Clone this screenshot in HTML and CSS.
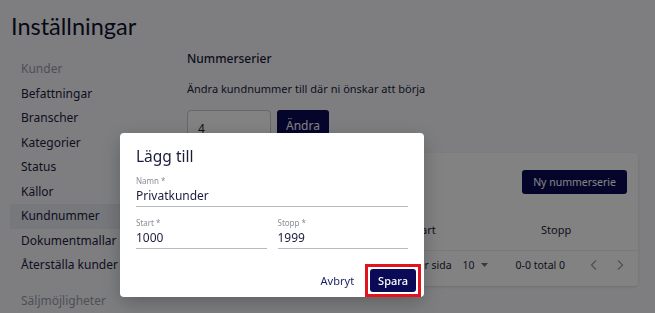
FILE: index.html
```html
<!DOCTYPE html>
<html lang="sv">
<head>
<meta charset="utf-8">
<title>Inställningar</title>
<link rel="stylesheet" href="styles.css">
</head>
<body>
<div class="page">
  <h1 class="title">Inställningar</h1>
  <div class="layout">
    <nav class="sidebar">
      <div class="nav-group">Kunder</div>
      <a class="nav-item">Befattningar</a>
      <a class="nav-item">Branscher</a>
      <a class="nav-item">Kategorier</a>
      <a class="nav-item">Status</a>
      <a class="nav-item">Källor</a>
      <a class="nav-item active">Kundnummer</a>
      <a class="nav-item">Dokumentmallar</a>
      <a class="nav-item">Återställa kunder</a>
      <div class="nav-group lower">Säljmöjligheter</div>
    </nav>
    <main class="main">
      <h2 class="section-title">Nummerserier</h2>
      <p class="section-text">Ändra kundnummer till där ni önskar att börja</p>
      <div class="change-row">
        <div class="num-input">4</div>
        <button class="btn primary">Ändra</button>
      </div>
      <section class="card">
        <div class="card-head">
          <button class="btn primary">Ny nummerserie</button>
        </div>
        <div class="table-head">
          <span class="col-name">Namn</span>
          <span class="col-start">Start</span>
          <span class="col-stop">Stopp</span>
        </div>
        <div class="table-foot">
          <span>Rader per sida</span>
          <span class="per-page">10 <svg width="7" height="4" viewBox="0 0 7 4"><path d="M0 0h7L3.5 4z" fill="currentColor"/></svg></span>
          <span class="range">0-0 total 0</span>
          <span class="pager">
            <svg width="8" height="12" viewBox="0 0 8 12"><path d="M6 1.5L1.5 6 6 10.5" fill="none" stroke="currentColor" stroke-width="1.3"/></svg>
            <svg width="8" height="12" viewBox="0 0 8 12"><path d="M2 1.5L6.5 6 2 10.5" fill="none" stroke="currentColor" stroke-width="1.3"/></svg>
          </span>
        </div>
      </section>
    </main>
  </div>
</div>
<div class="backdrop"></div>
<div class="dialog">
  <h3 class="dialog-title">Lägg till</h3>
  <div class="field">
    <label class="field-label">Namn *</label>
    <div class="field-value">Privatkunder</div>
  </div>
  <div class="field-row">
    <div class="field">
      <label class="field-label">Start *</label>
      <div class="field-value">1000</div>
    </div>
    <div class="field">
      <label class="field-label">Stopp *</label>
      <div class="field-value">1999</div>
    </div>
  </div>
  <div class="dialog-actions">
    <button class="btn text">Avbryt</button>
    <span class="highlight"><button class="btn primary">Spara</button></span>
  </div>
</div>
</body>
</html>
```

FILE: styles.css
```css
* { box-sizing: border-box; }
html, body { margin: 0; height: 100%; }
body {
  background: #f7f8fc;
  font-family: "Noto Sans", "DejaVu Sans", sans-serif;
  color: #1b1d3a;
  overflow: hidden;
}
.page { padding: 9px 0 0 10px; }
.title {
  margin: 0 0 0 1px;
  font-family: Lato, "Noto Sans", sans-serif;
  font-size: 23.5px;
  font-weight: 400;
  line-height: 34px;
  color: #11122f;
  letter-spacing: 0;
}
.layout {
  display: grid;
  grid-template-columns: 165px 1fr;
  gap: 12px;
  margin-top: 4px;
}
.sidebar { display: flex; flex-direction: column; padding-top: 10px; }
.nav-group, .nav-item {
  font-size: 12px;
  line-height: 24.5px;
  padding-left: 11px;
  color: #1e2040;
}
.nav-group { color: #9a9ca6; }
.nav-group.lower { margin-top: 11px; }
.active { background: #e9ebf3; }
.main { padding-right: 17px; }
.section-title {
  margin: 0;
  font-size: 12px;
  font-weight: 500;
  line-height: 24px;
}
.section-text {
  margin: 9px 0 0;
  font-size: 11px;
  line-height: 18px;
}
.change-row {
  display: flex;
  gap: 6px;
  margin-top: 12px;
  height: 31px;
}
.num-input {
  width: 84px;
  height: 38px;
  border: 1px solid #c9cbd3;
  border-radius: 4px;
  padding: 9px 10px;
  font-size: 12px;
  background: #fff;
}
.btn {
  font-family: inherit;
  border: 0;
  border-radius: 3px;
  cursor: pointer;
}
.btn.primary {
  background: #0b0a57;
  color: #fff;
  font-size: 12px;
  padding: 0 9px;
  height: 30px;
}
.btn.text {
  background: none;
  color: #1f2466;
  font-size: 11px;
  padding: 0 4px;
}
.card {
  margin-top: 12px;
  background: #fff;
  border-radius: 4px;
  box-shadow: 0 1px 3px rgba(0,0,0,.12);
  height: 133px;
  display: flex;
  flex-direction: column;
}
.card-head {
  display: flex;
  justify-content: flex-end;
  padding: 17px 11px 0;
}
.card-head .btn { height: 24px; font-size: 10.5px; padding: 0 11px; }
.table-head {
  display: grid;
  grid-template-columns: 210px 130px 1fr;
  font-size: 11px;
  padding: 28px 0 0 14px;
  height: 57px;
  border-bottom: 1px solid #eceef3;
}
.table-foot {
  display: flex;
  align-items: center;
  justify-content: flex-end;
  font-size: 10.5px;
  padding: 7px 14px 0 0;
}
.per-page { display: flex; align-items: center; gap: 6px; margin-left: 11px; color: #2a2c48; }
.per-page svg { color: #6f717c; }
.range { margin-left: 28px; }
.pager { display: flex; gap: 18px; color: #9ea0a8; margin-left: 25px; }
.backdrop {
  position: fixed;
  inset: 0;
  background: rgba(0,0,0,.49);
}
.dialog {
  position: fixed;
  left: 120px;
  top: 133px;
  width: 304px;
  height: 164px;
  background: #fff;
  border-radius: 4px;
  box-shadow: 0 6px 20px rgba(0,0,0,.25);
  padding: 12px 16px 0;
  display: flex;
  flex-direction: column;
}
.dialog-title {
  margin: 0;
  font-size: 15.5px;
  font-weight: 400;
  line-height: 22px;
  color: #1b1d3a;
}
.field { display: flex; flex-direction: column; border-bottom: 1px solid #b8bac2; }
.field-row .field { flex: 1; }
.dialog > .field { margin-top: 8px; }
.field-label { font-size: 8px; color: #8b8d97; line-height: 12px; }
.field-value { font-size: 12px; line-height: 18px; padding-bottom: 1px; }
.field-row { display: flex; gap: 11px; margin-top: 10px; }
.dialog-actions {
  display: flex;
  justify-content: flex-end;
  align-items: center;
  gap: 7px;
  margin-top: auto;
  margin-right: -13px;
}
.highlight {
  display: flex;
  border: 3px solid #e3121f;
  padding: 2px;
}
.highlight .btn { height: 23px; padding: 0 8px; font-size: 11px; font-weight: 500; }
```
